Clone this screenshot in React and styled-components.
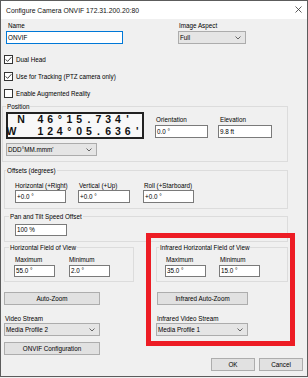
import React from "react";
import styled, { createGlobalStyle } from "styled-components";

const GlobalStyle = createGlobalStyle`
  html, body {
    margin: 0;
    padding: 0;
    background: #f0f0f0;
  }
`;

const coordLines = [" N 46°15.734'", "W  124°05.636'"];

const Chevron = () => (
  <svg width="6" height="4" viewBox="0 0 6 4">
    <polyline points="0.5,0.5 3,3 5.5,0.5" fill="none" stroke="#555" strokeWidth="0.9" />
  </svg>
);

const Check = () => (
  <svg width="7" height="7" viewBox="0 0 7 7">
    <polyline points="0.7,3.4 2.6,5.4 6.4,1.2" fill="none" stroke="#222" strokeWidth="0.9" />
  </svg>
);

const App = () => {
  return (
    <Window>
      <GlobalStyle />
      <TitleBar>
        <span>Configure Camera ONVIF 172.31.200.20:80</span>
        <svg width="7" height="7" viewBox="0 0 7 7">
          <path d="M0.5 0.5 L6.5 6.5 M6.5 0.5 L0.5 6.5" stroke="#333" strokeWidth="0.8" />
        </svg>
      </TitleBar>

      <Body>
        <Row $ml={4}>
          <Field $w={117}>
            <Label $indent={2}>Name</Label>
            <TextBox $focused>ONVIF</TextBox>
          </Field>
          <Field $w={68} $ml={55}>
            <Label>Image Aspect</Label>
            <Combo>
              <span>Full</span>
              <Chevron />
            </Combo>
          </Field>
        </Row>

        <Checks>
          <CheckRow>
            <Box>
              <Check />
            </Box>
            Dual Head
          </CheckRow>
          <CheckRow>
            <Box>
              <Check />
            </Box>
            Use for Tracking (PTZ camera only)
          </CheckRow>
          <CheckRow>
            <Box />
            Enable Augmented Reality
          </CheckRow>
        </Checks>

        <Group $w={286}>
          <Legend $ml={3}>Position</Legend>
          <GroupBody $pad="1px 0 5px 3px">
            <Row>
              <Column $gap={4}>
                <CoordBox>
                  {coordLines.map((line, i) => (
                    <CoordLine key={i}>
                      {line.split("").map((ch, j) => (
                        <Cell key={j}>{ch === " " ? "\u00a0" : ch}</Cell>
                      ))}
                    </CoordLine>
                  ))}
                </CoordBox>
                <Combo $w={91}>
                  <span>DDD°MM.mmm'</span>
                  <Chevron />
                </Combo>
              </Column>
              <Field $w={53} $ml={11} $mt={3}>
                <Label>Orientation</Label>
                <TextBox>0.0 °</TextBox>
              </Field>
              <Field $w={54} $ml={10} $mt={3}>
                <Label $indent={2}>Elevation</Label>
                <TextBox>9.8 ft</TextBox>
              </Field>
            </Row>
          </GroupBody>
        </Group>

        <Group $w={284} $ml={2} $mt={4}>
          <Legend $ml={1}>Offsets (degrees)</Legend>
          <GroupBody $pad="6px 0 5px 10px">
            <Row>
              <Field $w={51} $gap={0}>
                <Label $indent={0}>Horizontal (+Right)</Label>
                <TextBox>+0.0 °</TextBox>
              </Field>
              <Field $w={52} $ml={12} $gap={0}>
                <Label>Vertical (+Up)</Label>
                <TextBox>+0.0 °</TextBox>
              </Field>
              <Field $w={51} $ml={13} $gap={0}>
                <Label>Roll (+Starboard)</Label>
                <TextBox>+0.0 °</TextBox>
              </Field>
            </Row>
          </GroupBody>
        </Group>

        <Group $w={284} $ml={2} $mt={3}>
          <Legend $ml={4}>Pan and Tilt Speed Offset</Legend>
          <GroupBody $pad="3px 0 5px 10px">
            <TextBox $w={52} $h={12}>100 %</TextBox>
          </GroupBody>
        </Group>

        <Split>
          <Column>
            <Group $w={130}>
              <Legend $ml={4}>Horizontal Field of View</Legend>
              <GroupBody $pad="3px 0 4px 9px">
                <Row>
                  <Field $w={41}>
                    <Label>Maximum</Label>
                    <TextBox $h={12}>55.0 °</TextBox>
                  </Field>
                  <Field $w={41} $ml={14}>
                    <Label $indent={0}>Minimum</Label>
                    <TextBox $h={12}>2.0 °</TextBox>
                  </Field>
                </Row>
              </GroupBody>
            </Group>
            <Button $w={96} $mt={10}>Auto-Zoom</Button>
            <Field $w={96} $mt={9} $gap={0}>
              <Label>Video Stream</Label>
              <Combo>
                <span>Media Profile 2</span>
                <Chevron />
              </Combo>
            </Field>
            <Button $w={96} $mt={6}>ONVIF Configuration</Button>
          </Column>

          <Column>
            <Group $w={132}>
              <Legend $ml={2}>Infrared Horizontal Field of View</Legend>
              <GroupBody $pad="3px 0 4px 8px">
                <Row>
                  <Field $w={41}>
                    <Label>Maximum</Label>
                    <TextBox $h={12}>35.0 °</TextBox>
                  </Field>
                  <Field $w={41} $ml={13}>
                    <Label>Minimum</Label>
                    <TextBox $h={12}>15.0 °</TextBox>
                  </Field>
                </Row>
              </GroupBody>
            </Group>
            <Button $w={91} $mt={10} $ml={1}>Infrared Auto-Zoom</Button>
            <Field $w={92} $mt={9} $gap={0}>
              <Label>Infrared Video Stream</Label>
              <Combo>
                <span>Media Profile 1</span>
                <Chevron />
              </Combo>
            </Field>
          </Column>
        </Split>

        <Footer>
          <Button $w={44}>OK</Button>
          <Button $w={44}>Cancel</Button>
        </Footer>
      </Body>

      <Highlight />
    </Window>
  );
};

const Window = styled.div`
  position: relative;
  width: 308px;
  height: 377px;
  box-sizing: border-box;
  border: 1px solid #5c5c5c;
  background: #f0f0f0;
  font-family: "Liberation Sans", Arial, sans-serif;
  font-size: 6.3px;
  color: #000;
  overflow: hidden;
`;

const TitleBar = styled.div`
  height: 18px;
  background: #fff;
  display: flex;
  align-items: center;
  justify-content: space-between;
  padding: 0 5px 0 5px;
  font-size: 6.8px;
  color: #111;

  svg {
    margin-top: -2px;
  }
`;

const Body = styled.div`
  display: flex;
  flex-direction: column;
  padding: 2px 0 0 1px;
`;

const Row = styled.div`
  display: flex;
  align-items: flex-start;
  margin-left: ${(p) => p.$ml ?? 0}px;
`;

const Column = styled.div`
  display: flex;
  flex-direction: column;
  align-items: flex-start;
  gap: ${(p) => p.$gap ?? 0}px;
`;

const Field = styled.div`
  display: flex;
  flex-direction: column;
  gap: ${(p) => p.$gap ?? 1}px;
  width: ${(p) => p.$w}px;
  margin-left: ${(p) => p.$ml ?? 0}px;
  margin-top: ${(p) => p.$mt ?? 0}px;
`;

const Label = styled.div`
  height: 9px;
  line-height: 9px;
  padding-left: ${(p) => p.$indent ?? 1}px;
  white-space: nowrap;
`;

const TextBox = styled.div`
  width: ${(p) => (p.$w ? `${p.$w}px` : "auto")};
  height: ${(p) => p.$h ?? 13}px;
  line-height: ${(p) => (p.$h ?? 13) - 2}px;
  box-sizing: border-box;
  border: 1px solid ${(p) => (p.$focused ? "#0078d7" : "#7a7a7a")};
  background: #fff;
  padding-left: 1px;
  white-space: nowrap;
`;

const Combo = styled.div`
  width: ${(p) => (p.$w ? `${p.$w}px` : "auto")};
  height: 13px;
  box-sizing: border-box;
  border: 1px solid #acacac;
  background: #e5e5e5;
  display: flex;
  align-items: center;
  justify-content: space-between;
  padding: 0 4px 0 1px;
  white-space: nowrap;
`;

const Checks = styled.div`
  display: flex;
  flex-direction: column;
  margin: 7px 0 0 2px;
`;

const CheckRow = styled.div`
  height: 17px;
  display: flex;
  align-items: center;
  gap: 3px;
`;

const Box = styled.div`
  width: 9px;
  height: 9px;
  box-sizing: border-box;
  border: 1px solid #333;
  background: #fff;
  display: flex;
  align-items: center;
  justify-content: center;
`;

const Group = styled.fieldset`
  margin: ${(p) => p.$mt ?? 0}px 0 0 ${(p) => p.$ml ?? 0}px;
  padding: 0;
  width: ${(p) => p.$w}px;
  box-sizing: border-box;
  min-width: 0;
  border: 1px solid #dcdcdc;
`;

const Legend = styled.legend`
  margin-left: ${(p) => p.$ml ?? 0}px;
  padding: 0 1px;
  height: 9px;
  line-height: 9px;
  font-size: 6.3px;
  white-space: nowrap;
`;

const GroupBody = styled.div`
  padding: ${(p) => p.$pad};
`;

const CoordBox = styled.div`
  width: 138px;
  height: 27px;
  box-sizing: border-box;
  border: 2px solid #222;
  background: #f8f8f8;
  font-size: 10.5px;
  font-weight: bold;
  color: #111;
`;

const CoordLine = styled.div`
  display: flex;
  height: 11.5px;
  line-height: 11.5px;
  margin-left: -1.5px;
`;

const Cell = styled.span`
  width: 9.7px;
  flex: none;
  text-align: center;
`;

const Split = styled.div`
  display: grid;
  grid-template-columns: 130px 132px;
  column-gap: 22px;
  margin: 1px 0 0 2px;
`;

const Button = styled.div`
  width: ${(p) => p.$w}px;
  height: 13px;
  box-sizing: border-box;
  margin: ${(p) => p.$mt ?? 0}px 0 0 ${(p) => p.$ml ?? 0}px;
  border: 1px solid #adadad;
  background: #e1e1e1;
  display: flex;
  align-items: center;
  justify-content: center;
  white-space: nowrap;
`;

const Footer = styled.div`
  display: flex;
  justify-content: flex-end;
  gap: 4px;
  margin: 3px 4px 0 0;
`;

const Highlight = styled.div`
  position: absolute;
  left: 145px;
  top: 232px;
  width: 149px;
  height: 113px;
  box-sizing: border-box;
  border: 5px solid #ed1c24;
  pointer-events: none;
`;

export default App;
